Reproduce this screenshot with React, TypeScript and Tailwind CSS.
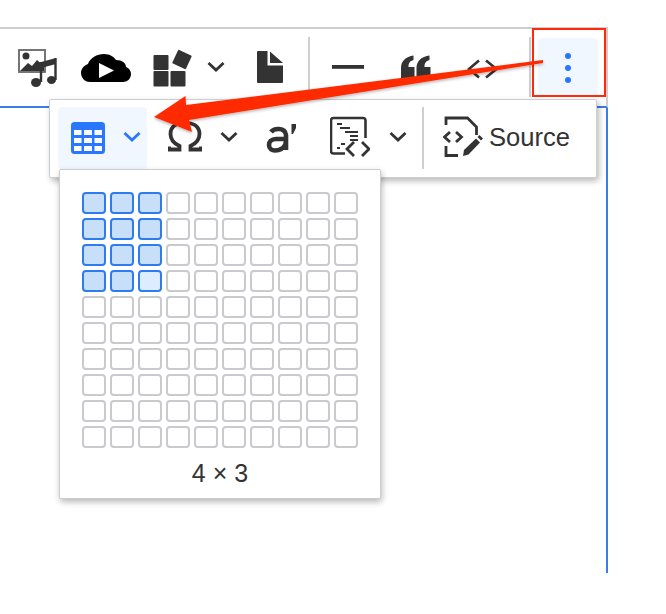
import React from "react";

const DARK = "#333333";
const BLUE = "#2977ff";

function Chevron({ color = DARK, y, className = "" }: { color?: string; y: number; className?: string }) {
  return (
    <svg className={`w-[18px] h-[60px] shrink-0 ${className}`} viewBox={`0 ${y} 18 60`} fill="none">
      <path d="M1.5 0 L9 7 L16.500 0" transform={`translate(0 ${y + 26})`} stroke={color} strokeWidth="2.800" />
    </svg>
  );
}

function Sep({ className = "" }: { className?: string }) {
  return <div className={`w-[2px] shrink-0 bg-[#ccced1] ${className}`} />;
}

function Cell({ state }: { state: "on" | "hover" | "off" }) {
  const cls =
    state === "on"
      ? "border-[#2f7cf0] bg-[#c8dffa]"
      : state === "hover"
        ? "border-[#2f7cf0] bg-[#deecff]"
        : "border-[#c9cacd] bg-white";
  return <div className={`w-[24px] h-[22px] rounded-[4px] border-2 ${cls}`} />;
}

export default function App() {
  const cells = Array.from({ length: 100 }, (_, i) => {
    const r = Math.floor(i / 10);
    const c = i % 10;
    const state: "on" | "hover" | "off" = r === 3 && c === 2 ? "hover" : r < 4 && c < 3 ? "on" : "off";
    return <Cell key={i} state={state} />;
  });

  return (
    <div className="relative w-[666px] h-[614px] bg-white overflow-hidden font-['Liberation_Sans',Arial,sans-serif] text-[#333333]">
      <div className="pt-[27px] w-[608px]">
        {/* main toolbar */}
        <div className="flex items-start h-[81px] border-t-2 border-[#ccced1] border-r-2 border-b-2 border-b-[#3b7de8] pt-[8px] pl-[18px]">
          <svg className="w-[40px] h-[60px] shrink-0" viewBox="18 37 40 60">
            <rect x="19" y="50" width="26" height="22" fill="#fff" stroke="#666" strokeWidth="1.800" />
            <circle cx="26" cy="56" r="3.500" fill={DARK} />
            <path d="M20 71 L28 63 L32 66 L37 60 L44 66 L44 71 Z" fill={DARK} />
            <path d="M41 62 L56 58 L56 64 L41 68 Z" fill={DARK} />
            <path d="M41 62 V82 M55.500 58 V80" stroke={DARK} strokeWidth="2.400" fill="none" />
            <ellipse cx="36" cy="82.500" rx="5" ry="4.500" fill={DARK} />
            <ellipse cx="51.500" cy="80" rx="4.500" ry="4" fill={DARK} />
          </svg>
          <svg className="w-[50px] h-[60px] shrink-0 ml-[23px]" viewBox="81 37 50 60">
            <path d="M90 82 C84 82 81 77 81 73 C81 68 85 65 88 64 C90 58 97 54 104 54 C110 54 114 57 116 60 C122 60 126 63 126 67 C129 68 131 71 131 74 C131 79 127 82 123 82 Z" fill="#000" />
            <path d="M99 63 L114 70.500 L99 78 Z" fill="#fff" />
          </svg>
          <svg className="w-[40px] h-[60px] shrink-0 ml-[22px]" viewBox="153 37 40 60" fill={DARK}>
            <rect x="153.500" y="55" width="15" height="15" rx="1" />
            <rect x="153.500" y="71" width="15" height="15.500" rx="1" />
            <rect x="170.500" y="71" width="15" height="15.500" rx="1" />
            <rect x="174.500" y="52" width="15" height="15" rx="1" transform="rotate(25 182 59.500)" />
          </svg>
          <Chevron y={37} className="ml-[14px]" />
          <svg className="w-[26px] h-[60px] shrink-0 ml-[32px]" viewBox="257 37 26 60" fill={DARK}>
            <path d="M258 51 H267.500 V65.500 H283 V82 Q283 83 282 83 H258 Q257 83 257 82 V52 Q257 51 258 51 Z" />
            <path d="M270 51.500 L283 63 H270 Z" />
          </svg>
          <Sep className="h-[60px] ml-[25px]" />
          <svg className="w-[32px] h-[60px] shrink-0 ml-[22px]" viewBox="332 37 32 60">
            <rect x="332" y="65" width="32" height="3.800" fill={DARK} />
          </svg>
          <svg className="w-[31px] h-[60px] shrink-0 ml-[36px]" viewBox="400 37 31 60" fill={DARK}>
            <path d="M401 79 V68 C401 61 406 56.500 413.500 55.500 V60 C410 61 408.500 63 408.500 67 H414.500 V79 Z" />
            <path d="M416.500 79 V68 C416.500 61 421.500 56.500 429.500 55.500 V60 C426 61 424.500 63 424.500 67 H430.500 V79 Z" />
          </svg>
          <svg className="w-[32px] h-[60px] shrink-0 ml-[36px]" viewBox="467 37 32 60" fill="none" stroke={DARK} strokeWidth="2.600">
            <path d="M479 60.500 L469 69 L479 77.500" />
            <path d="M486 60.500 L496.500 69 L486 77.500" />
          </svg>
          <Sep className="h-[60px] ml-[30px]" />
          <div className="w-[60px] h-[59px] ml-[7px] mt-px rounded-[4px] bg-[#f0f7ff] flex flex-col items-center justify-center gap-[6px]">
            <div className="w-[6px] h-[6px] rounded-full bg-[#2977ff]" />
            <div className="w-[6px] h-[6px] rounded-full bg-[#2977ff]" />
            <div className="w-[6px] h-[6px] rounded-full bg-[#2977ff]" />
          </div>
        </div>
        {/* editing area edge */}
        <div className="h-[465px] border-r-2 border-[#3b7de8]" />
      </div>

      {/* overflow dropdown */}
      <div className="absolute left-[49px] top-[99px] w-[548px] h-[79px] bg-white border border-[#ccced1] rounded-[2px] shadow-[2px_3px_6px_rgba(0,0,0,0.28)] flex items-start pl-[8px] pt-[7px]">
        <div className="w-[89px] h-[62px] rounded-[4px] bg-[#f0f7ff] flex items-start pl-[13px] shrink-0">
          <svg className="w-[34px] h-[60px] shrink-0" viewBox="71 108 34 60">
            <rect x="71" y="123" width="34" height="32" rx="3.500" fill={BLUE} />
            <path d="M74 131 H81.500 V136 H74 Z M84 131 H92 V136 H84 Z M94.500 131 H102 V136 H94.500 Z M74 139 H81.500 V144 H74 Z M84 139 H92 V144 H84 Z M94.500 139 H102 V144 H94.500 Z M74 147 H81.500 V152 H74 Z M84 147 H92 V152 H84 Z M94.500 147 H102 V152 H94.500 Z" fill="#fff" />
          </svg>
          <Chevron y={108} color={BLUE} className="ml-[18px]" />
        </div>
        <svg className="w-[34px] h-[60px] shrink-0 ml-[21px]" viewBox="168 108 34 60" fill="none" stroke={DARK} strokeWidth="3.800">
          <path d="M169 147.500 V150.500 H179.500 V147 C173 144 170.500 140 170.500 135 C170.500 127 177 123.800 185 123.800 C193 123.800 199.500 127 199.500 135 C199.500 140 197 144 190.500 147 V150.500 H201 V147.500" />
        </svg>
        <Chevron y={108} className="ml-[18px]" />
        <svg className="w-[30px] h-[60px] shrink-0 ml-[28px]" viewBox="266 108 30 60" fill="none" stroke={DARK}>
          <path d="M271 133 C274 129 285 128 286 136 V151 M286 140 H276 C271 140 269 143 269 146 C269 150 272 151.500 275 151.500 C281 151.500 286 148 286 142" strokeWidth="4.600" />
          <path d="M291.500 125 L296 125 L296 129 L293 135 L291.500 135 Z" fill={DARK} stroke="none" />
        </svg>
        <svg className="w-[40px] h-[60px] shrink-0 ml-[34px]" viewBox="330 108 40 60" fill="none" stroke={DARK} strokeWidth="2">
          <path d="M345 154.500 H333.500 Q331 154.500 331 152 V121.500 Q331 119 333.500 119 H363 Q365.500 119 365.500 121.500 V139" strokeWidth="2.600" />
          <path d="M337 125 H342 M340 129 H350 M345 133 H358 M350 137 H358 M350 141 H358 M341 145 H345 M337 149 H340" strokeWidth="1.800" />
          <path d="M354 143 L347 150 L354 157 M362 143 L369 150 L362 157" strokeWidth="2.800" />
        </svg>
        <Chevron y={108} className="ml-[19px]" />
        <Sep className="h-[62px] ml-[15px]" />
        <svg className="w-[40px] h-[60px] shrink-0 ml-[19px]" viewBox="443 108 40 60" fill="none" stroke={DARK} strokeWidth="2.800">
          <path d="M446 126 V119 H467.500 L476.500 128 V136" />
          <path d="M446 147 V156.500 H458" />
          <path d="M450 133 L444.500 138 L450 143 M456 133 L461.500 138 L456 143" />
          <path d="M463 157 L464 151 L476 139.500 L480 143.500 L468.500 155.500 Z" fill={DARK} stroke="none" />
          <path d="M477.500 138 L479.500 136 L483 139.500 L481 141.500 Z" fill={DARK} stroke="none" />
        </svg>
        <span className="ml-[6px] mt-[15px] text-[25.600px] leading-[30px] text-[#333333]">Source</span>
      </div>

      {/* table grid dropdown */}
      <div className="absolute left-[59px] top-[169px] w-[322px] h-[330px] bg-white border border-[#ccced1] rounded-[2px] shadow-[1px_3px_6px_rgba(0,0,0,0.28)] pt-[22px] pl-[22px] flex flex-col">
        <div className="grid grid-cols-[repeat(10,24px)] grid-rows-[repeat(10,22px)] gap-x-[4px] gap-y-[4px]">
          {cells}
        </div>
        <div className="w-[276px] text-center mt-[10px] text-[25px] leading-[30px] text-[#333333]">4 × 3</div>
      </div>

      {/* annotation: red box */}
      <div className="absolute left-[532px] top-[28px] w-[74px] h-[69px] border-2 border-[#ff2a0a]" />

      {/* annotation: arrow */}
      <svg className="absolute left-0 top-0 w-[666px] h-[614px] pointer-events-none" viewBox="0 0 666 614">
        <defs>
          <filter id="s" x="-5%" y="-20%" width="110%" height="150%">
            <feDropShadow dx="0" dy="1.500" stdDeviation="1.500" floodColor="#000" floodOpacity="0.3" />
          </filter>
        </defs>
        <path d="M154 117 L185.500 96 L186 105 L543 60 L543 63 L189 120 L192 132 Z" fill="#ff2a00" filter="url(#s)" />
      </svg>
    </div>
  );
}
